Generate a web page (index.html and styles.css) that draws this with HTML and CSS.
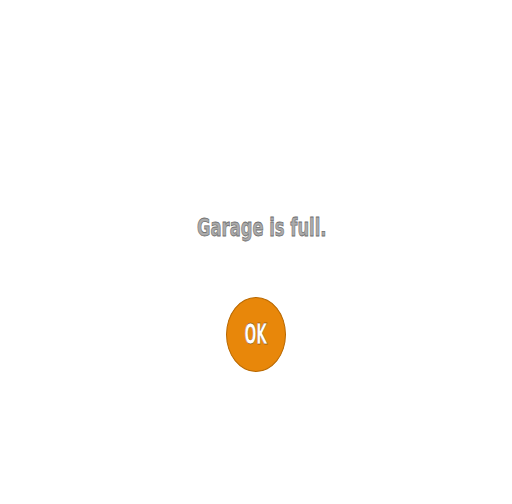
FILE: index.html
```html
<!DOCTYPE html>
<html>
<head>
<meta charset="utf-8">
<link rel="stylesheet" href="styles.css">
</head>
<body>
<main class="dialog">
  <p class="message">Garage is full.</p>
  <button class="ok-btn"><span class="ok-label">OK</span></button>
</main>
</body>
</html>
```
FILE: styles.css
```css
html, body {
  margin: 0;
  padding: 0;
  background: #ffffff;
}
.dialog {
  width: 512px;
  height: 504px;
  display: flex;
  flex-direction: column;
  align-items: center;
  padding-top: 211px;
  box-sizing: border-box;
}
.message {
  margin: 0 0 0 12px;
  font-family: "DejaVu Sans", sans-serif;
  font-weight: bold;
  font-size: 25px;
  line-height: 34px;
  color: #ababab;
  -webkit-text-stroke: 0.8px #6f6f6f;
  transform: scaleX(0.655);
  white-space: nowrap;
}
.ok-btn {
  margin-top: 52px;
  width: 60px;
  height: 75px;
  border-radius: 50%;
  border: 1px solid #b86800;
  background: #e8870a;
  color: #ffffff;
  padding: 0;
  display: flex;
  align-items: center;
  justify-content: center;
}
.ok-label {
  display: inline-block;
  font-family: "DejaVu Sans", sans-serif;
  font-weight: bold;
  font-size: 28px;
  line-height: 28px;
  transform: scaleX(0.5);
  -webkit-text-stroke: 0.4px #5a3000;
}
```
